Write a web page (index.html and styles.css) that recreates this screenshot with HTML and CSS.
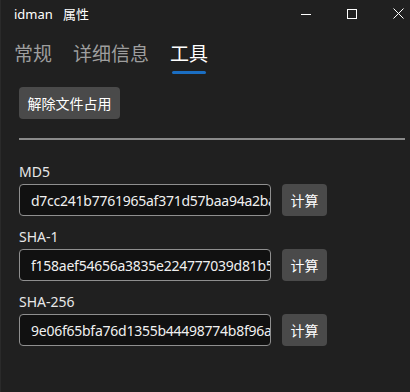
FILE: index.html
```html
<!DOCTYPE html>
<html lang="zh-CN">
<head>
  <meta charset="UTF-8">
  <title>idman 属性</title>
  <link rel="stylesheet" href="styles.css">
</head>
<body>
  <div class="window">
    <div class="titlebar">
      <span class="title">idman&nbsp;&nbsp; 属性</span>
      <div class="controls">
        <div class="ctl">
          <svg width="10" height="10" viewBox="0 0 10 10"><path d="M0 5.5h10" stroke="#fff" stroke-width="1"/></svg>
        </div>
        <div class="ctl">
          <svg width="10" height="10" viewBox="0 0 10 10"><rect x="0.5" y="0.5" width="9" height="9" fill="none" stroke="#fff" stroke-width="1"/></svg>
        </div>
        <div class="ctl">
          <svg width="11" height="11" viewBox="0 0 11 11"><path d="M0.5 0.5l10 10M10.5 0.5l-10 10" stroke="#fff" stroke-width="1"/></svg>
        </div>
      </div>
    </div>

    <div class="tabs">
      <div class="tab">常规</div>
      <div class="tab">详细信息</div>
      <div class="tab active">工具</div>
    </div>

    <div class="content">
      <button class="btn unlock">解除文件占用</button>
      <div class="separator"></div>

      <div class="hashes">
        <div class="hash-group">
          <div class="hash-label">MD5</div>
          <div class="hash-row">
            <input class="hash-input" type="text" readonly value="d7cc241b7761965af371d57baa94a2ba">
            <button class="btn calc">计算</button>
          </div>
        </div>

        <div class="hash-group">
          <div class="hash-label">SHA-1</div>
          <div class="hash-row">
            <input class="hash-input" type="text" readonly value="f158aef54656a3835e224777039d81b5">
            <button class="btn calc">计算</button>
          </div>
        </div>

        <div class="hash-group">
          <div class="hash-label">SHA-256</div>
          <div class="hash-row">
            <input class="hash-input" type="text" readonly value="9e06f65bfa76d1355b44498774b8f96a">
            <button class="btn calc">计算</button>
          </div>
        </div>
      </div>
    </div>
  </div>
</body>
</html>
```

FILE: styles.css
```css
html, body {
  margin: 0;
  padding: 0;
  background-color: #202020;
}

body {
  font-family: "Noto Sans", "Noto Sans CJK SC", sans-serif;
  color: #ffffff;
  overflow: hidden;
}

.window {
  width: 410px;
  height: 392px;
  border-left: 1px solid #2a2a2a;
  box-sizing: border-box;
}

/* title bar */
.titlebar {
  display: flex;
  align-items: center;
  height: 27px;
  padding-left: 13px;
}

.title {
  font-size: 13px;
  color: #ffffff;
}

.controls {
  display: flex;
  margin-left: auto;
  margin-right: -11px;
}

.ctl {
  width: 46px;
  height: 27px;
  display: flex;
  align-items: center;
  justify-content: center;
}

/* tabs */
.tabs {
  display: flex;
  gap: 21px;
  margin-top: 13px;
  padding-left: 13px;
}

.tab {
  font-size: 19px;
  line-height: 28px;
  color: #9e9e9e;
  padding-bottom: 6px;
}

.tab.active {
  color: #ffffff;
  position: relative;
}

.tab.active::after {
  content: "";
  position: absolute;
  left: 2px;
  right: 2px;
  bottom: 0;
  height: 3px;
  border-radius: 2px;
  background-color: #1b6ec2;
}

/* content */
.content {
  padding: 13px 5px 0 18px;
}

.btn {
  font-family: "Noto Sans", "Noto Sans CJK SC", sans-serif;
  font-size: 14px;
  color: #ffffff;
  background-color: #4a4a4a;
  border: none;
  border-radius: 4px;
  height: 32px;
  padding: 0 8px;
  cursor: pointer;
}

.unlock {
  width: 101px;
}

.separator {
  height: 2px;
  background-color: #8a8a8a;
  margin-top: 19px;
}

.hashes {
  display: flex;
  flex-direction: column;
  gap: 11px;
  margin-top: 22px;
}

.hash-label {
  font-size: 14px;
  line-height: 20px;
  color: #e8e8e8;
  margin-bottom: 2px;
}

.hash-row {
  display: flex;
  gap: 11px;
}

.hash-input {
  width: 252px;
  height: 32px;
  box-sizing: border-box;
  background-color: #111111;
  border: 1px solid #8f8f8f;
  border-radius: 4px;
  padding: 0 0 0 11px;
  font-family: "Noto Sans", sans-serif;
  font-size: 14px;
  letter-spacing: -0.25px;
  color: #f0f0f0;
  outline: none;
}

.calc {
  width: 45px;
}
```
